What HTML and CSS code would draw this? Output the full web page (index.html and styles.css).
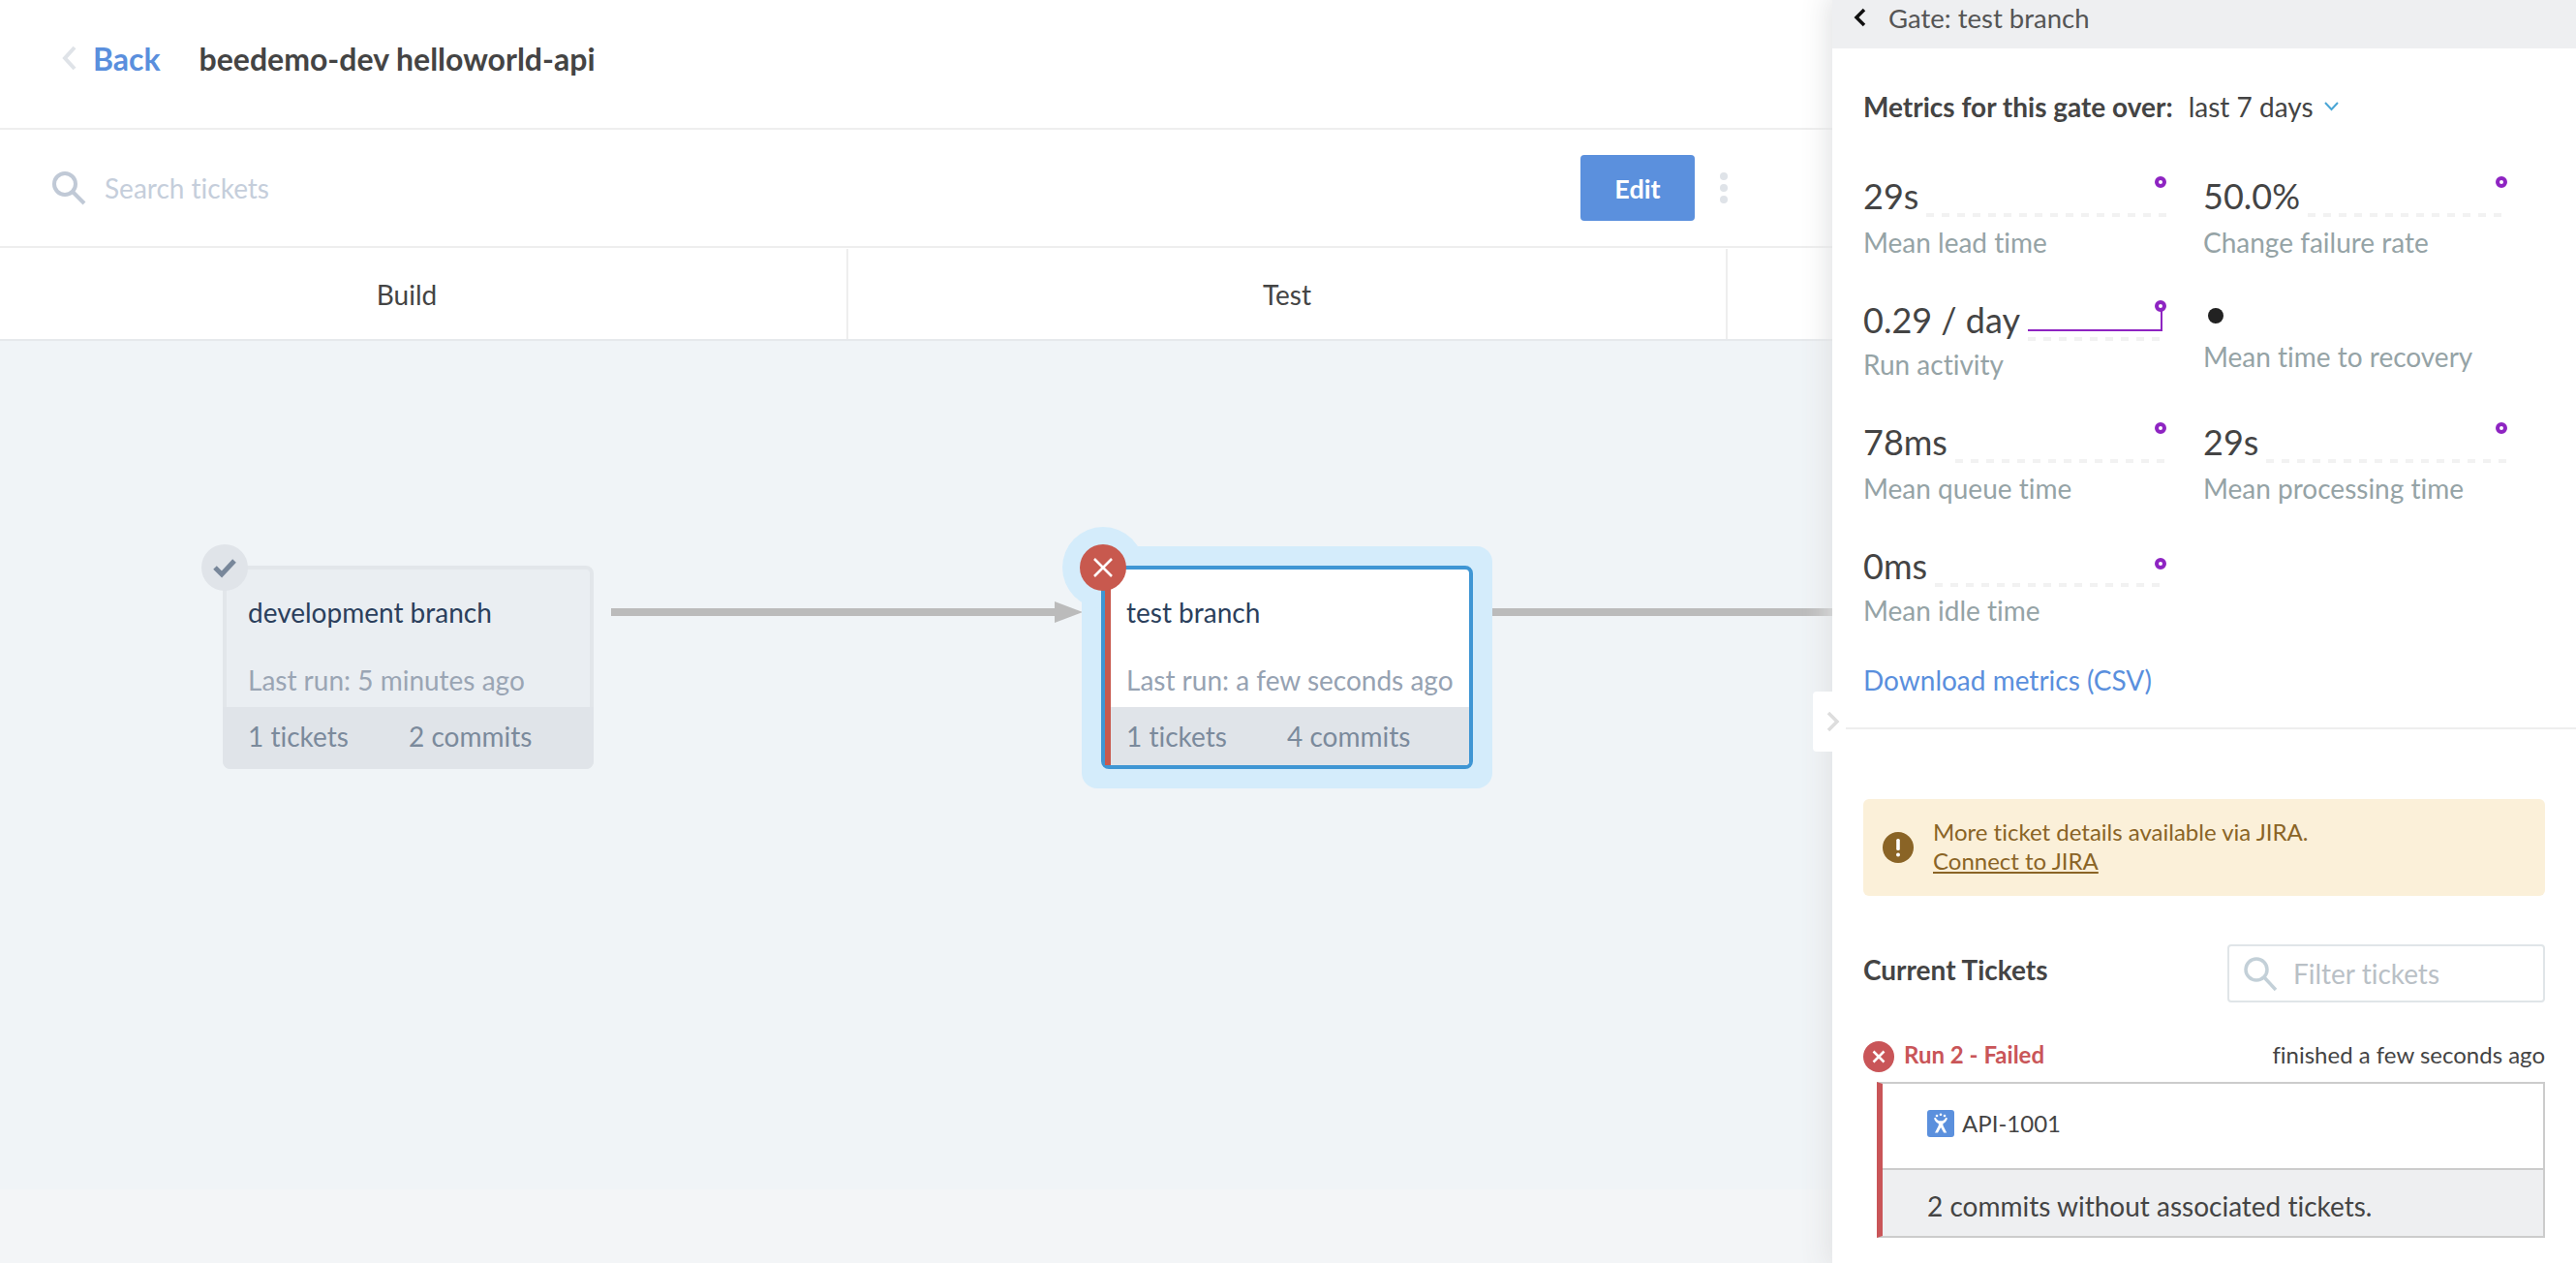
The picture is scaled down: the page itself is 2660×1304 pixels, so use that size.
FILE: index.html
```html
<!DOCTYPE html>
<html lang="en">
<head>
  <meta charset="UTF-8">
  <title>beedemo-dev helloworld-api</title>
  <link rel="stylesheet" href="styles.css">
</head>
<body>
  <div class="page">
    <main class="main">
      <header class="topbar">
        <svg class="back-icon" width="16" height="26" viewBox="0 0 16 26"><path d="M13 2 3 13l10 11" fill="none" stroke="#dfe3e8" stroke-width="4"/></svg>
        <a class="back-link">Back</a>
        <h1 class="page-title">beedemo-dev helloworld-api</h1>
      </header>

      <div class="toolbar">
        <svg class="search-icon" width="36" height="36" viewBox="0 0 36 36"><circle cx="14" cy="14" r="11" fill="none" stroke="#c0c9d6" stroke-width="4"/><path d="m22 22 12 12" stroke="#c0c9d6" stroke-width="4"/></svg>
        <span class="search-text">Search tickets</span>
        <button class="edit-btn">Edit</button>
        <div class="kebab"><i></i><i></i><i></i></div>
      </div>

      <div class="columns">
        <div class="col col-first">Build</div>
        <div class="col col-second">Test</div>
        <div class="col col-rest"></div>
      </div>

      <div class="canvas">
        <svg class="edges" width="1892" height="876" viewBox="0 0 1892 876">
          <path d="M631 280H1092" stroke="#bbb" stroke-width="8"/>
          <path d="M1089 269l29 11-29 11z" fill="#bbb"/>
          <path d="M1541 280H1892" stroke="#bbb" stroke-width="8"/>
        </svg>

        <div class="node node-dev">
          <span class="node-badge badge-ok">
            <svg width="26" height="22" viewBox="0 0 26 22"><path d="M3 11l7 7L23 4" fill="none" stroke="#78879a" stroke-width="5"/></svg>
          </span>
          <div class="node-body">
            <div class="node-name">development branch</div>
            <div class="node-run">Last run: 5 minutes ago</div>
          </div>
          <div class="node-foot"><span class="foot-tickets">1 tickets</span><span>2 commits</span></div>
        </div>

        <div class="node-halo"></div>
        <div class="halo-circle"></div>
        <div class="node node-test">
          <div class="node-body">
            <div class="node-name">test branch</div>
            <div class="node-run">Last run: a few seconds ago</div>
          </div>
          <div class="node-foot"><span class="foot-tickets">1 tickets</span><span>4 commits</span></div>
        </div>
        <span class="node-badge badge-fail">
          <svg width="22" height="22" viewBox="0 0 22 22"><path d="M2 2l18 18M20 2 2 20" stroke="#fff" stroke-width="2.5"/></svg>
        </span>
      </div>
      <div class="canvas-foot"></div>
    </main>

    <aside class="panel">
      <div class="panel-toggle">
        <svg width="14" height="20" viewBox="0 0 14 20"><path d="M2 1l9 9-9 9" fill="none" stroke="#ddd" stroke-width="3.5"/></svg>
      </div>
      <div class="panel-head">
        <svg width="14" height="20" viewBox="0 0 14 20"><path d="M11 2 3 10l8 8" fill="none" stroke="#111" stroke-width="3.5"/></svg>
        <span>Gate: test branch</span>
      </div>

      <section class="metrics">
        <div class="metrics-title">
          <strong>Metrics for this gate over:</strong>
          <span class="range">last 7 days</span>
          <svg width="15" height="10" viewBox="0 0 15 10"><path d="M1 1l6.500 7 6.500-7" fill="none" stroke="#4aa6d6" stroke-width="2"/></svg>
        </div>
        <div class="metric-grid">
          <div class="metric">
            <div class="metric-top"><span class="metric-value">29s</span><span class="spark"><i class="spark-dot"></i></span></div>
            <div class="metric-label">Mean lead time</div>
          </div>
          <div class="metric">
            <div class="metric-top"><span class="metric-value">50.0%</span><span class="spark"><i class="spark-dot"></i></span></div>
            <div class="metric-label">Change failure rate</div>
          </div>
          <div class="metric">
            <div class="metric-top"><span class="metric-value">0.29 / day</span><span class="spark"><i class="spark-line"></i><i class="spark-dot"></i></span></div>
            <div class="metric-label metric-label-tight">Run activity</div>
          </div>
          <div class="metric">
            <div class="metric-top metric-top-empty"><i class="empty-dot"></i></div>
            <div class="metric-label">Mean time to recovery</div>
          </div>
          <div class="metric">
            <div class="metric-top"><span class="metric-value">78ms</span><span class="spark"><i class="spark-dot"></i></span></div>
            <div class="metric-label">Mean queue time</div>
          </div>
          <div class="metric">
            <div class="metric-top"><span class="metric-value">29s</span><span class="spark"><i class="spark-dot"></i></span></div>
            <div class="metric-label">Mean processing time</div>
          </div>
          <div class="metric">
            <div class="metric-top"><span class="metric-value">0ms</span><span class="spark"><i class="spark-dot spark-dot-low"></i></span></div>
            <div class="metric-label metric-label-tight">Mean idle time</div>
          </div>
        </div>
        <a class="download">Download metrics (CSV)</a>
      </section>

      <section class="tickets">
        <div class="alert">
          <svg class="alert-icon" width="32" height="32" viewBox="0 0 32 32"><circle cx="16" cy="16" r="16" fill="#8a6426"/><rect x="14.2" y="7" width="3.6" height="12" rx="1.5" fill="#fff"/><circle cx="16" cy="23.5" r="2" fill="#fff"/></svg>
          <div class="alert-text">
            <div>More ticket details available via JIRA.</div>
            <a class="alert-link">Connect to JIRA</a>
          </div>
        </div>

        <div class="tickets-head">
          <h2>Current Tickets</h2>
          <div class="filter">
            <svg width="36" height="36" viewBox="0 0 36 36"><circle cx="14" cy="14" r="11" fill="none" stroke="#c3d0d8" stroke-width="3.5"/><path d="m22 22 12 13" stroke="#c3d0d8" stroke-width="3.5"/></svg>
            <span>Filter tickets</span>
          </div>
        </div>

        <div class="run-row">
          <svg width="32" height="32" viewBox="0 0 32 32"><circle cx="16" cy="16" r="16" fill="#c95558"/><path d="M10.5 10.5l11 11M21.5 10.5l-11 11" stroke="#fff" stroke-width="2.5"/></svg>
          <span class="run-status">Run 2 - Failed</span>
          <span class="run-time">finished a few seconds ago</span>
        </div>

        <div class="ticket-box">
          <div class="ticket-row">
            <svg width="28" height="28" viewBox="0 0 28 28"><rect width="28" height="28" rx="3" fill="#5b90dd"/><g fill="#fff"><circle cx="10" cy="6" r="1.3"/><circle cx="14" cy="4.8" r="1.3"/><circle cx="18" cy="6" r="1.3"/><path d="M7 8.500l1.800-.8c1.200 2.600 2.700 3.600 5.200 3.600s4-1 5.200-3.600l1.800.8c-1 3-2.300 4.600-4.600 5.500v2l3.800 7.500h-3l-3.100-5.600-3.100 5.600h-3l3.800-7.500v-2C9.300 13.100 8 11.500 7 8.500z"/></g></svg>
            <span>API-1001</span>
          </div>
          <div class="commit-row">2 commits without associated tickets.</div>
        </div>
      </section>
    </aside>
  </div>
</body>
</html>
```

FILE: styles.css
```css
* {
  margin: 0;
  padding: 0;
  box-sizing: border-box;
}

html, body {
  height: 100%;
  overflow: hidden;
}

body {
  font-family: 'Lato', sans-serif;
  font-size: 28px;
  font-variant-ligatures: none;
  color: #444;
  background: #fff;
}

.page {
  display: flex;
  height: 1304px;
}

/* Left side */
.main {
  width: 1892px;
  display: flex;
  flex-direction: column;
}

.topbar {
  height: 134px;
  padding: 0 0 12px 64px;
  display: flex;
  align-items: center;
  border-bottom: 2px solid #eee;
}

.back-link {
  margin-left: 16px;
  font-size: 32px;
  font-weight: 700;
  color: #5a8fdd;
}

.page-title {
  margin-left: 40px;
  font-size: 32px;
  font-weight: 700;
  color: #444;
}

.toolbar {
  height: 122px;
  padding-left: 53px;
  display: flex;
  align-items: center;
  border-bottom: 2px solid #eee;
}

.search-text {
  margin-left: 19px;
  flex: 1;
  color: #c5cedb;
}

.edit-btn {
  width: 118px;
  height: 68px;
  border: none;
  border-radius: 4px;
  background: #5b90dd;
  color: #fff;
  font: 700 27px 'Lato', sans-serif;
}

.kebab {
  width: 8px;
  margin: 0 108px 0 26px;
  display: flex;
  flex-direction: column;
  gap: 4px;
}

.kebab i {
  height: 8px;
  border-radius: 50%;
  background: #dfe3e8;
}

.columns {
  height: 96px;
  padding-top: 1px;
  display: flex;
  border-bottom: 2px solid #e6e9ec;
}

.col {
  display: flex;
  align-items: center;
  justify-content: center;
  border-right: 2px solid #eee;
}

.col-first {
  width: 876px;
  padding-right: 34px;
}

.col-second {
  width: 908px;
}

.col-rest {
  flex: 1;
  border-right: none;
}

.canvas {
  position: relative;
  height: 876px;
  background: #f0f4f7;
}

.canvas-foot {
  flex: 1;
  background: #f3f5f7;
}

.edges {
  position: absolute;
  left: 0;
  top: 0;
}

.node {
  position: absolute;
  top: 232px;
  height: 210px;
  display: flex;
  flex-direction: column;
  border: 4px solid;
  border-radius: 8px;
}

.node-dev {
  left: 230px;
  width: 383px;
  background: #eaeef2;
  border-color: #e2e6ea;
}

.node-test {
  left: 1137px;
  width: 384px;
  background: #fff;
  border-color: #3f96d4;
}

.node-test .node-body,
.node-test .node-foot {
  border-left: 6px solid #c8594e;
}

.node-body {
  flex: 1;
  padding: 24px 0 0 22px;
}

.node-test .node-body {
  padding-left: 16px;
}

.node-name {
  color: #2b3f5c;
  line-height: 40px;
}

.node-run {
  margin-top: 30px;
  line-height: 40px;
  color: #9aa5b4;
  white-space: nowrap;
}

.node-test .node-run {
  color: #96a2b2;
}

.node-foot {
  height: 64px;
  margin: 0 -4px -4px;
  padding: 0 0 4px 26px;
  display: flex;
  align-items: center;
  background: #e0e4e9;
  color: #7b8a9c;
  border-radius: 0 0 8px 8px;
}

.node-test .node-foot {
  height: 60px;
  margin: 0;
  padding: 0 0 0 16px;
  border-radius: 0 0 4px 0;
}

.foot-tickets {
  width: 166px;
}

.node-badge {
  position: absolute;
  width: 48px;
  height: 48px;
  border-radius: 50%;
  display: flex;
  align-items: center;
  justify-content: center;
}

.badge-ok {
  left: -26px;
  top: -26px;
  background: #e0e4e9;
}

.badge-fail {
  left: 1115px;
  top: 210px;
  background: #c8594e;
}

.node-halo {
  position: absolute;
  left: 1117px;
  top: 212px;
  width: 424px;
  height: 250px;
  border-radius: 16px;
  background: #d4ecfb;
}

.halo-circle {
  position: absolute;
  left: 1097px;
  top: 192px;
  width: 84px;
  height: 84px;
  border-radius: 50%;
  background: #d4ecfb;
}

/* Right panel */
.panel {
  position: relative;
  z-index: 2;
  width: 768px;
  background: #fff;
  box-shadow: 0 0 26px 5px rgba(224, 225, 227, 0.95);
}

.panel-toggle {
  position: absolute;
  left: -20px;
  top: 714px;
  width: 34px;
  height: 62px;
  padding-left: 14px;
  display: flex;
  align-items: center;
  background: #fff;
  border-radius: 4px 0 0 4px;
}

.panel-head {
  height: 50px;
  padding: 0 0 14px 22px;
  display: flex;
  align-items: center;
  gap: 22px;
  background: #eeeff1;
  color: #555;
  font-size: 27.5px;
}

.metrics {
  padding: 40px 32px 31px;
  border-bottom: 2px solid #eee;
}

.metrics-title {
  height: 40px;
  display: flex;
  align-items: center;
}

.metrics-title strong {
  font-weight: 700;
}

.range {
  margin: 0 11px 0 16px;
}

.metric-grid {
  margin-top: 44px;
  display: grid;
  grid-template-columns: 313px 314px;
  grid-template-rows: 128px 126px 128px 127px;
  column-gap: 38px;
}

.metric-top {
  height: 50px;
  display: flex;
  align-items: flex-end;
}

.metric-top-empty {
  height: 40px;
}

.metric-value {
  font-size: 36px;
  line-height: 36px;
  padding-bottom: 4px;
  white-space: nowrap;
  color: #444;
}

.spark {
  position: relative;
  flex: 1;
  height: 100%;
  margin-left: 8px;
  background: repeating-linear-gradient(90deg, #f2f2f2 0 8px, transparent 8px 16px) left bottom / 100% 4px no-repeat;
}

.spark-dot {
  position: absolute;
  right: 0;
  top: 8px;
  width: 12px;
  height: 12px;
  border: 4px solid #8e24c2;
  border-radius: 50%;
  background: #fff;
}

.spark-dot-low {
  top: 20px;
}

.spark-line {
  position: absolute;
  left: 0;
  right: 4px;
  top: 15px;
  bottom: 10px;
  border-right: 2px solid #8e24c2;
  border-bottom: 2px solid #8e24c2;
}

.empty-dot {
  width: 16px;
  height: 16px;
  margin: 16px 0 0 5px;
  align-self: flex-start;
  border-radius: 50%;
  background: #222;
}

.metric-label {
  margin-top: 6px;
  line-height: 40px;
  color: #95a3a6;
}

.metric-label-tight {
  margin-top: 4px;
}

.download {
  display: block;
  margin-top: 1px;
  line-height: 36px;
  color: #5a8fdd;
}

.tickets {
  padding: 72px 32px 0;
}

.alert {
  height: 100px;
  padding-left: 20px;
  display: flex;
  align-items: center;
  gap: 20px;
  border-radius: 6px;
  background: #fbf0d9;
  color: #8a6426;
  font-size: 24px;
  line-height: 30px;
}

.alert-text {
  padding-bottom: 3px;
}

.alert-link {
  text-decoration: underline;
}

.tickets-head {
  height: 60px;
  margin-top: 50px;
  display: flex;
  justify-content: space-between;
}

.tickets-head h2 {
  font-size: 28px;
  line-height: 52px;
  font-weight: 700;
}

.filter {
  width: 328px;
  padding-left: 14px;
  display: flex;
  align-items: center;
  gap: 16px;
  border: 2px solid #e0e5e8;
  border-radius: 4px;
  color: #b9c0c6;
}

.run-row {
  height: 32px;
  margin-top: 40px;
  display: flex;
  align-items: center;
  font-size: 24px;
}

.run-status {
  margin-left: 10px;
  padding-bottom: 5px;
  flex: 1;
  font-weight: 700;
  color: #c95558;
}

.run-time {
  padding-bottom: 5px;
  color: #444;
}

.ticket-box {
  height: 161px;
  margin: 10px 0 0 14px;
  border: 2px solid #ccc;
  border-left: 6px solid #c95558;
}

.ticket-row {
  height: 89px;
  padding: 0 0 6px 46px;
  display: flex;
  align-items: center;
  gap: 8px;
  font-size: 24px;
  border-bottom: 2px solid #ccc;
}

.commit-row {
  height: 68px;
  padding: 6px 0 0 46px;
  display: flex;
  align-items: center;
  background: #eeeff1;
}
```
